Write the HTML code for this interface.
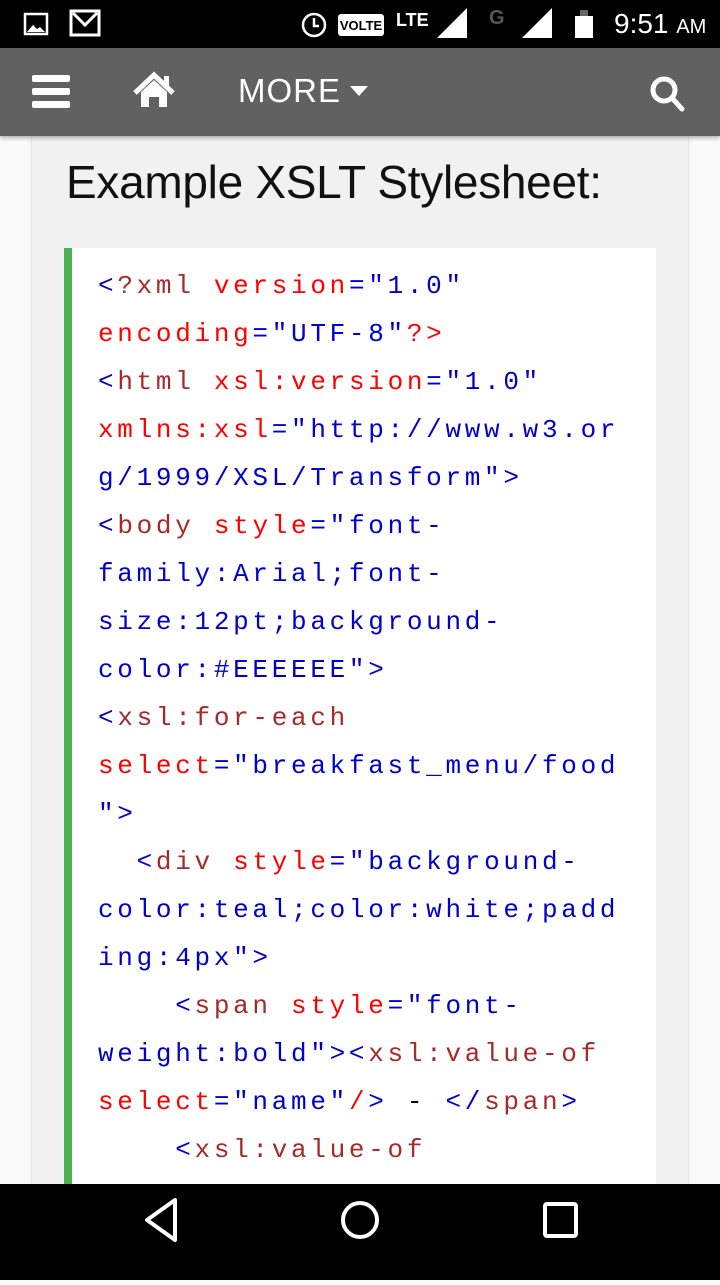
<!DOCTYPE html>
<html><head><meta charset="utf-8"><style>
*{margin:0;padding:0;box-sizing:border-box}
body{width:720px;height:1280px;overflow:hidden;background:#fafafa;position:relative;font-family:"Liberation Sans",sans-serif}
#status{position:absolute;top:0;left:0;width:720px;height:48px;background:#000;color:#fff}
#nav{position:absolute;top:48px;left:0;width:720px;height:88px;background:#616161;box-shadow:0 2px 4px rgba(0,0,0,.3);z-index:2}
#card{position:absolute;top:136px;left:32px;width:656px;height:1100px;background:#f1f1f1;box-shadow:0 0 3px rgba(0,0,0,.2)}
h1{position:absolute;left:66px;top:155px;font-size:46px;font-weight:normal;color:#111;letter-spacing:-0.3px}
#code{position:absolute;left:64px;top:248px;width:592px;height:940px;background:#fff;border-left:8px solid #4caf50;padding:14px 0 0 26px;font-family:"Liberation Mono","Courier New",monospace;font-size:26px;letter-spacing:3.7px;line-height:48px;white-space:pre;color:#0000cd}
.t{color:#a52a2a}.a{color:#ff0000}.b{color:#0000cd}
#bottom{position:absolute;top:1184px;left:0;width:720px;height:96px;background:#000}
</style></head><body>
<div id="status">
<svg width="720" height="48">
<rect x="25" y="14" width="22" height="20" fill="none" stroke="#fff" stroke-width="2.5"/><path d="M27 32 L33 25 L37 29 L40 27 L45 32Z" fill="#fff"/>
<rect x="71" y="11" width="28" height="24" fill="none" stroke="#fff" stroke-width="3"/><path d="M73 13 L85 25 L97 13" fill="none" stroke="#fff" stroke-width="3"/>
<circle cx="314" cy="25" r="11" fill="none" stroke="#fff" stroke-width="2.5"/><path d="M314 18 V26 H319" stroke="#fff" stroke-width="2.5" fill="none"/>
<rect x="338" y="14" width="46" height="22" rx="3" fill="#fff"/>
<text x="361" y="30" font-size="13" font-weight="bold" text-anchor="middle" fill="#000" font-family="Liberation Sans">VOLTE</text>
<text x="396" y="26" font-size="18" font-weight="bold" fill="#fff" font-family="Liberation Sans">LTE</text>
<path d="M437 38 L467 38 L467 8Z" fill="#fff"/>
<text x="489" y="24" font-size="20" font-weight="bold" fill="#555" font-family="Liberation Sans">G</text>
<path d="M522 38 L552 38 L552 8Z" fill="#fff"/>
<rect x="575" y="16" width="18" height="22" fill="#fff"/><rect x="580" y="10" width="8" height="6" fill="#666"/>
</svg>
<div style="position:absolute;left:614px;top:8px;font-size:28px;color:#fff">9:51 <span style="font-size:20px">AM</span></div>
</div>
<div id="nav">
<svg width="720" height="88" style="position:absolute;left:0;top:0">
<rect x="32" y="27" width="38" height="7" rx="2" fill="#fff"/><rect x="32" y="40" width="38" height="7" rx="2" fill="#fff"/><rect x="32" y="53" width="38" height="7" rx="2" fill="#fff"/>
<path d="M135 45 L154 27 L173 45" fill="none" stroke="#fff" stroke-width="5"/><path d="M141 44 L154 32 L167 44 V59 H159 V49 H149 V59 H141Z" fill="#fff"/><rect x="164" y="28" width="5" height="10" fill="#fff"/>
<path d="M350 38 L368 38 L359 48Z" fill="#fff"/>
<circle cx="664" cy="42" r="11" fill="none" stroke="#fff" stroke-width="5"/><path d="M672 50 L682 61" stroke="#fff" stroke-width="5" stroke-linecap="round"/>
</svg>
<div style="position:absolute;left:238px;top:24px;font-size:33px;color:#fff;letter-spacing:1px">MORE</div>
</div>
<div id="card"></div>
<h1>Example XSLT Stylesheet:</h1>
<div id="code"><span class="b">&lt;</span><span class="t">?xml</span> <span class="a">version</span>="1.0"
<span class="a">encoding</span>="UTF-8"<span class="a">?&gt;</span>
&lt;<span class="t">html</span> <span class="a">xsl:version</span>="1.0"
<span class="a">xmlns:xsl</span>="http://www.w3.or
g/1999/XSL/Transform"&gt;
&lt;<span class="t">body</span> <span class="a">style</span>="font-
family:Arial;font-
size:12pt;background-
color:#EEEEEE"&gt;
&lt;<span class="t">xsl:for-each</span>
<span class="a">select</span>="breakfast_menu/food
"&gt;
  &lt;<span class="t">div</span> <span class="a">style</span>="background-
color:teal;color:white;padd
ing:4px"&gt;
    &lt;<span class="t">span</span> <span class="a">style</span>="font-
weight:bold"&gt;&lt;<span class="t">xsl:value-of</span>
<span class="a">select</span>="name"<span class="a">/</span>&gt; <span style="color:#000">-</span> &lt;/<span class="t">span</span>&gt;
    &lt;<span class="t">xsl:value-of</span></div>
<div id="bottom">
<svg width="720" height="96">
<path d="M175 16 L147 36 L175 56Z" fill="none" stroke="#fff" stroke-width="4" stroke-linejoin="round"/>
<circle cx="360" cy="36" r="17" fill="none" stroke="#fff" stroke-width="4"/>
<rect x="545" y="20" width="31" height="32" rx="2" fill="none" stroke="#fff" stroke-width="4"/>
</svg>
</div>
</body></html>
